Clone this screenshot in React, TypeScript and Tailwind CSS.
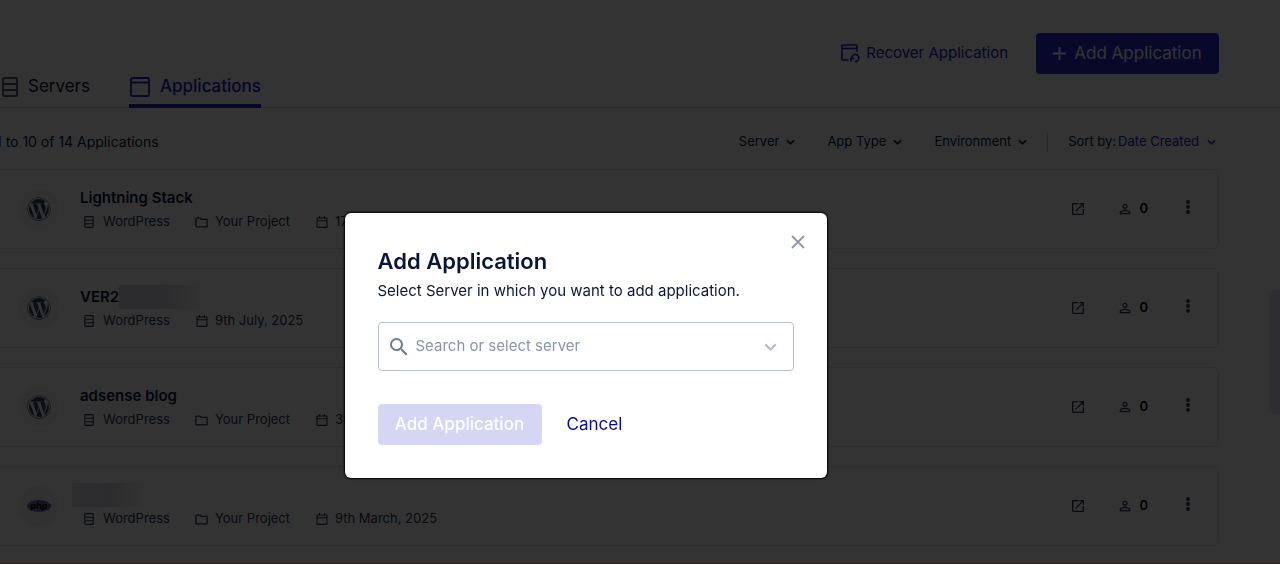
import React from 'react';
import { MdOpenInNew, MdOutlineFolder, MdPersonOutline, MdSearch } from 'react-icons/md';
import { FaWordpress } from 'react-icons/fa';

interface Application {
  name: string;
  kind: 'wordpress' | 'php';
  hidden?: 'part' | 'all';
  project?: string;
  created: string;
}

const applications: Application[] = [
  { name: 'Lightning Stack', kind: 'wordpress', project: 'Your Project', created: '17th' },
  { name: 'VER2', kind: 'wordpress', hidden: 'part', created: '9th July, 2025' },
  { name: 'adsense blog', kind: 'wordpress', project: 'Your Project', created: '30th' },
  { name: '', kind: 'php', hidden: 'all', project: 'Your Project', created: '9th March, 2025' },
];

const filters = ['Server', 'App Type', 'Environment'];

function ServerIcon({ className }: { className: string }) {
  return (
    <svg className={className} viewBox="0 0 16 20" fill="none" stroke="currentColor" strokeWidth="1.8">
      <rect x="1" y="1" width="14" height="18" rx="1" />
      <path d="M1 7h14M1 13h14" />
    </svg>
  );
}

function WindowIcon({ className }: { className: string }) {
  return (
    <svg className={className} viewBox="0 0 20 20" fill="none" stroke="currentColor" strokeWidth="1.8">
      <rect x="1" y="1" width="18" height="18" rx="1.5" />
      <path d="M1 5.500h18" />
    </svg>
  );
}

function RecoverIcon() {
  return (
    <svg className="h-5 w-5" viewBox="0 0 20 20" fill="none" stroke="currentColor" strokeWidth="1.6">
      <path d="M8.500 17H2.700a.7.7 0 0 1-.7-.7V2.700A.7.7 0 0 1 2.700 2h13.600a.7.7 0 0 1 .7.7V9" />
      <path d="M2 5.500h15" />
      <path d="M11.800 16a3.600 3.600 0 1 1 3.200 2.600" />
      <path d="M11 18.600v-3.100h3.100" />
    </svg>
  );
}

function CalendarIcon() {
  return (
    <svg className="h-3 w-3" viewBox="0 0 12 12" fill="none" stroke="currentColor" strokeWidth="1.1">
      <rect x="1" y="2" width="10" height="9.400" rx="0.6" />
      <path d="M1 4.800h10M3.500 0v2.500M8.500 0v2.500" />
    </svg>
  );
}

function ChevronIcon({ className }: { className: string }) {
  return (
    <svg className={className} viewBox="0 0 10 6" fill="none" stroke="currentColor" strokeWidth="1.7">
      <path d="M1 1l4 4 4-4" />
    </svg>
  );
}

function AppLogo({ kind }: { kind: Application['kind'] }) {
  return (
    <div className="flex h-10 w-10 items-center justify-center rounded-full bg-[#f3f3f8]">
      {kind === 'wordpress' ? (
        <FaWordpress className="h-6 w-6 text-[#32405c]" />
      ) : (
        <svg className="h-3 w-6" viewBox="0 0 24 12">
          <ellipse cx="12" cy="6" rx="12" ry="6" fill="#6f65a8" />
          <text x="12" y="8.500" textAnchor="middle" fontSize="9" fontStyle="italic" fontWeight="700" fill="#000">
            php
          </text>
        </svg>
      )}
    </div>
  );
}

function ApplicationRow({ app }: { app: Application }) {
  return (
    <li className="flex h-20 items-center rounded-md border border-[#e2e2e2] pl-[26px] pr-[22px]">
      <AppLogo kind={app.kind} />
      <div className="ml-[21px] flex-1 pt-0.5">
        <div className="flex h-6 items-center">
          {app.name && <h3 className="text-[15px] font-semibold">{app.name}</h3>}
          {app.hidden === 'part' && (
            <span className="h-6 w-[86px] bg-linear-to-r from-[#dcdce4] via-[#dadae4] to-white" />
          )}
          {app.hidden === 'all' && (
            <span className="-ml-2 h-6 w-[74px] bg-linear-to-r from-[#e4e4ec] via-[#dcdce6] to-white" />
          )}
        </div>
        <div className="flex h-6 items-center text-[13px] text-[#26334f]">
          <span className="flex w-[114px] items-center gap-2 pl-[3px]">
            <ServerIcon className="h-3 w-3" />
            WordPress
          </span>
          {app.project && (
            <span className="flex w-[120px] items-center gap-1.5">
              <MdOutlineFolder className="h-[15px] w-[15px]" />
              {app.project}
            </span>
          )}
          <span className="flex items-center gap-[7px] pl-0.5">
            <CalendarIcon />
            {app.created}
          </span>
        </div>
      </div>
      <div className="flex items-center text-[#2b3552]">
        <button type="button" aria-label="Open application" className="mr-[31px]">
          <MdOpenInNew className="h-4 w-4" />
        </button>
        <span className="mr-8 flex items-center gap-1.5 text-[13px] font-semibold text-black">
          <MdPersonOutline className="h-4 w-4 text-[#2b3552]" />0
        </span>
        <button type="button" aria-label="More actions" className="flex w-4 justify-center pb-1">
          <svg className="h-[14px] w-1" viewBox="0 0 4 14" fill="currentColor">
            <circle cx="2" cy="2" r="1.9" />
            <circle cx="2" cy="7" r="1.9" />
            <circle cx="2" cy="12" r="1.9" />
          </svg>
        </button>
      </div>
    </li>
  );
}

function AddApplicationModal() {
  return (
    <div className="fixed inset-0 flex items-start justify-center bg-black/80 pr-[109px] pt-[213px]">
      <div
        role="dialog"
        aria-labelledby="modal-title"
        className="relative w-[482px] rounded-md bg-white px-[33px] pb-[33px] pt-[34px] shadow-[0_0_2px_1px_#000]"
      >
        <button type="button" aria-label="Close" className="absolute right-[22px] top-[22px] text-[#8d97aa]">
          <svg className="h-[14px] w-[14px]" viewBox="0 0 14 14" fill="none" stroke="currentColor" strokeWidth="1.8">
            <path d="M1 1l12 12M13 1L1 13" />
          </svg>
        </button>
        <h2 id="modal-title" className="text-[22px] leading-7 font-semibold text-[#09163a]">
          Add Application
        </h2>
        <p className="mt-1 text-[15px] leading-6 text-[#09163a]">
          Select Server in which you want to add application.
        </p>
        <div className="mt-[19px] flex h-[49px] items-center rounded border border-[#b9bfca] pl-2 pr-4">
          <MdSearch className="h-6 w-6 text-[#6d7a8f]" />
          <input
            type="text"
            aria-label="Server"
            placeholder="Search or select server"
            className="ml-[5px] min-w-0 flex-1 text-[15px] placeholder:text-[#8b95a7] outline-none"
          />
          <ChevronIcon className="h-2 w-[13px] text-[#b9bdc6]" />
        </div>
        <div className="mt-[33px] flex items-center gap-[25px]">
          <button type="button" disabled className="h-[41px] w-[164px] rounded bg-[#d5d6f4] pt-px text-[17px] font-medium text-white">
            Add Application
          </button>
          <button type="button" className="pt-px text-[17px] text-[#0a0a9c]">
            Cancel
          </button>
        </div>
      </div>
    </div>
  );
}

export default function App() {
  return (
    <div className="relative min-h-screen overflow-hidden border-b border-[#e8a0a8] bg-white font-['Inter',sans-serif] text-[#09163a]">
      <header className="flex h-[108px] justify-between border-b border-[#dcdcdc] pr-[61px]">
        <nav className="flex items-end gap-[39px] text-[17px]">
          <a href="#servers" className="flex h-10 items-center gap-2.5 pl-0.5">
            <ServerIcon className="h-5 w-4 text-[#4a5670]" />
            Servers
          </a>
          <a
            href="#applications"
            className="-mb-px flex h-10 items-center gap-2.5 border-b-4 border-[#2121c4] pl-px pt-0.5 font-medium text-[#2121c4]"
          >
            <WindowIcon className="h-5 w-5" />
            Applications
          </a>
        </nav>
        <div className="flex items-start gap-7 pt-[33px]">
          <button type="button" className="flex h-10 items-center gap-1.5 text-[15px] text-[#2121c4]">
            <RecoverIcon />
            Recover Application
          </button>
          <button
            type="button"
            className="flex h-[41px] w-[183px] items-center justify-center gap-2 rounded bg-[#2b2bd6] text-[17px] text-white"
          >
            <svg className="h-[13px] w-[13px]" viewBox="0 0 13 13" stroke="currentColor" strokeWidth="1.8">
              <path d="M6.500 0v13M0 6.500h13" />
            </svg>
            Add Application
          </button>
        </div>
      </header>

      <main className="pr-[61px]">
        <div className="flex h-[61px] items-center justify-between pt-1.5">
          <p className="-ml-1 text-[14px]">1 to 10 of 14 Applications</p>
          <div className="flex items-center text-[13px]">
            {filters.map((filter) => (
              <div key={filter} className="mr-8 flex items-center gap-[7px]">
                <select aria-label={filter} className="appearance-none field-sizing-content">
                  <option>{filter}</option>
                </select>
                <ChevronIcon className="h-1.5 w-[9px]" />
              </div>
            ))}
            <div className="flex items-center">
              <span className="-ml-3 mr-5 h-5 w-px bg-[#cfcfcf]" />
              <label htmlFor="sort">Sort by:</label>
              <select id="sort" className="ml-0.5 mr-2 appearance-none field-sizing-content text-[#2121c4]">
                <option>Date Created</option>
              </select>
              <ChevronIcon className="mr-[3px] h-1.5 w-[9px] text-[#2121c4]" />
            </div>
          </div>
        </div>
        <ul className="-ml-2 flex flex-col gap-[19px]">
          {applications.map((app) => (
            <ApplicationRow key={app.created} app={app} />
          ))}
        </ul>
      </main>

      <div className="absolute right-0 top-[290px] h-[124px] w-[11px] rounded-l bg-[#e6e2fa]" />
      <AddApplicationModal />
    </div>
  );
}
